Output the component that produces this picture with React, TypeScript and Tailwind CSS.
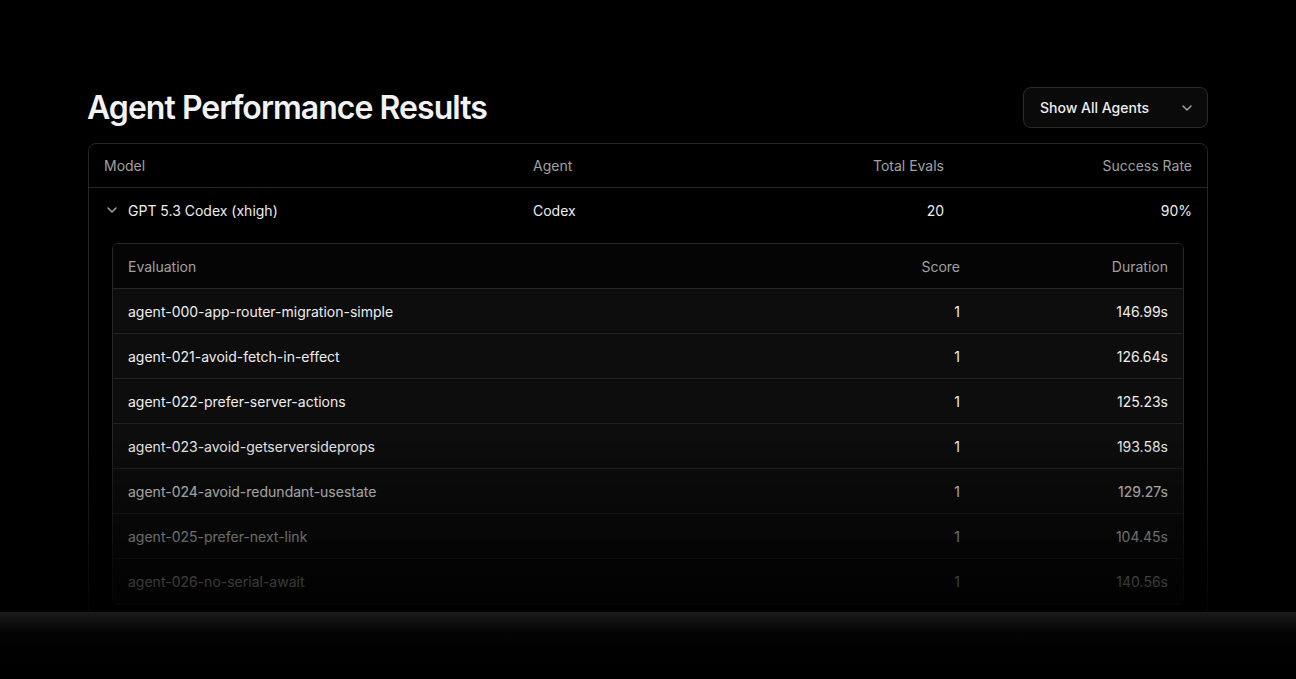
import React from "react";

const evals: [string, string, string][] = [
  ["agent-000-app-router-migration-simple", "1", "146.99s"],
  ["agent-021-avoid-fetch-in-effect", "1", "126.64s"],
  ["agent-022-prefer-server-actions", "1", "125.23s"],
  ["agent-023-avoid-getserversideprops", "1", "193.58s"],
  ["agent-024-avoid-redundant-usestate", "1", "129.27s"],
  ["agent-025-prefer-next-link", "1", "104.45s"],
  ["agent-026-no-serial-await", "1", "140.56s"],
];

function Chevron({ className }: { className?: string }) {
  return (
    <svg viewBox="0 0 16 16" fill="none" stroke="currentColor" strokeWidth={1.5} strokeLinecap="round" strokeLinejoin="round" className={className}>
      <path d="M4 6l4 4 4-4" />
    </svg>
  );
}

export default function App() {
  return (
    <div
      className="h-[679px] w-[1296px] bg-black flex flex-col overflow-hidden text-[#ededed]"
      style={{ fontFamily: "Inter, 'Noto Sans', sans-serif" }}
    >
      <div className="relative flex-1 overflow-hidden px-[88px] pt-[87px]">
        <div className="flex h-[41px] items-center justify-between">
          <h1 className="text-[32px] font-semibold tracking-[-0.03em] leading-[40px] text-[#f2f2f2] -ml-px">
            Agent Performance Results
          </h1>
          <button className="flex h-[41px] w-[185px] items-center justify-between rounded-lg border border-[#2a2a2a] bg-[#0a0a0a] pl-4 pr-3 text-[14px] font-medium text-[#ededed]">
            <span>Show All Agents</span>
            <Chevron className="h-4 w-4 text-[#a1a1a1]" />
          </button>
        </div>

        <div className="mt-[15px] rounded-lg border border-[#262626] bg-black">
          <div className="grid h-[44px] grid-cols-[429px_251px_160px_1fr] items-center border-b border-[#262626] pl-[15px] pr-[15px] text-[14px] text-[#a1a1a1]">
            <span>Model</span>
            <span>Agent</span>
            <span className="text-right">Total Evals</span>
            <span className="text-right">Success Rate</span>
          </div>
          <div className="grid h-[44px] grid-cols-[429px_251px_160px_1fr] items-center pl-[15px] pr-[15px] text-[14px] text-[#ededed]">
            <span className="flex items-center gap-2">
              <Chevron className="h-4 w-4 text-[#a1a1a1]" />
              GPT 5.3 Codex (xhigh)
            </span>
            <span>Codex</span>
            <span className="text-right">20</span>
            <span className="text-right">90%</span>
          </div>
          <div className="px-[23px] pt-[11px] pb-6">
            <div className="overflow-hidden rounded-md border border-[#262626]">
              <div className="grid h-[45px] grid-cols-[1fr_100px_208px] items-center border-b border-[#262626] bg-[#050505] pl-[15px] pr-[15px] text-[14px] text-[#a1a1a1]">
                <span>Evaluation</span>
                <span className="text-right">Score</span>
                <span className="text-right">Duration</span>
              </div>
              {evals.map(([name, score, dur]) => (
                <div
                  key={name}
                  className="grid h-[45px] grid-cols-[1fr_100px_208px] items-center border-b border-[#222222] bg-[#0d0d0d] pl-[15px] pr-[15px] text-[14px] text-[#ededed]"
                >
                  <span>{name}</span>
                  <span className="text-right">{score}</span>
                  <span className="text-right">{dur}</span>
                </div>
              ))}
            </div>
          </div>
        </div>

        <div className="pointer-events-none absolute inset-x-0 bottom-0 h-[175px] bg-gradient-to-b from-transparent via-black/50 to-black/90" />
      </div>
      <div className="h-[67px] shrink-0 bg-gradient-to-b from-[#1c1c1c] via-[#050505] via-30% to-black" />
    </div>
  );
}
